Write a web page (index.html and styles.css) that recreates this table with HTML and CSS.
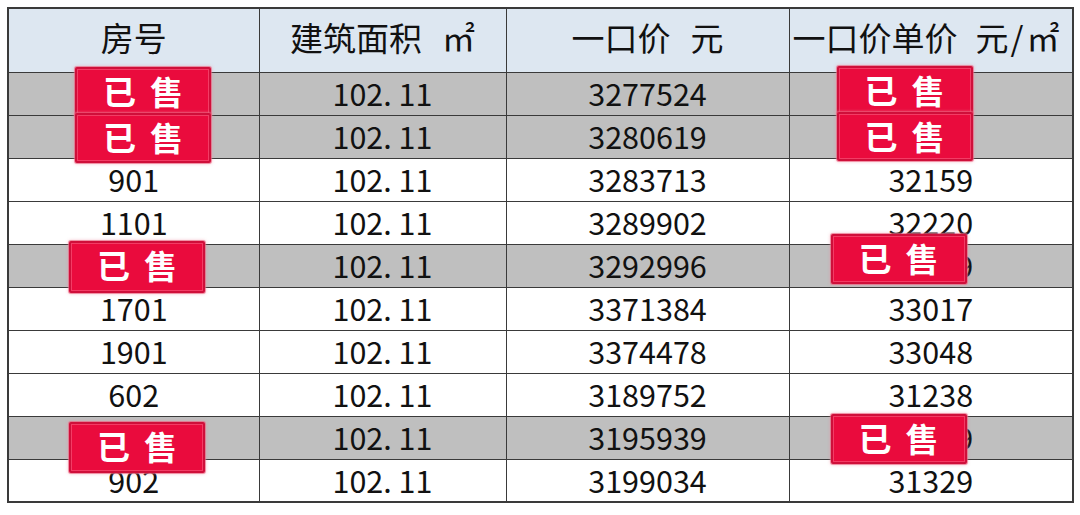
FILE: index.html
```html
<!DOCTYPE html>
<html lang="zh-CN">
<head>
<meta charset="utf-8">
<title>价格表</title>
<link rel="stylesheet" href="styles.css">
</head>
<body>
<table class="price-table">
  <colgroup>
    <col class="c1"><col class="c2"><col class="c3"><col class="c4">
  </colgroup>
  <thead>
    <tr class="head-row">
      <th>房号</th>
      <th>建筑面积<span class="unit">㎡</span></th>
      <th>一口价<span class="unit">元</span></th>
      <th class="wide">一口价单价<span class="unit">元<span class="slash">/</span>㎡</span></th>
    </tr>
  </thead>
  <tbody>
    <tr class="sold">
      <td class="cell">701<span class="stamp s1a">已售</span></td>
      <td>102. 11</td><td>3277524</td>
      <td class="cell">32098<span class="stamp s4a">已售</span></td>
    </tr>
    <tr class="sold">
      <td class="cell">801<span class="stamp s1b">已售</span></td>
      <td>102. 11</td><td>3280619</td>
      <td class="cell">32128<span class="stamp s4b">已售</span></td>
    </tr>
    <tr><td>901</td><td>102. 11</td><td>3283713</td><td>32159</td></tr>
    <tr><td>1101</td><td>102. 11</td><td>3289902</td><td>32220</td></tr>
    <tr class="sold">
      <td class="cell">1201<span class="stamp s1c">已售</span></td>
      <td>102. 11</td><td>3292996</td>
      <td class="cell">32249<span class="stamp s4c">已售</span></td>
    </tr>
    <tr><td>1701</td><td>102. 11</td><td>3371384</td><td>33017</td></tr>
    <tr><td>1901</td><td>102. 11</td><td>3374478</td><td>33048</td></tr>
    <tr><td>602</td><td>102. 11</td><td>3189752</td><td>31238</td></tr>
    <tr class="sold">
      <td class="cell">802<span class="stamp s1d">已售</span></td>
      <td>102. 11</td><td>3195939</td>
      <td class="cell">31299<span class="stamp s4d">已售</span></td>
    </tr>
    <tr><td>902</td><td>102. 11</td><td>3199034</td><td>31329</td></tr>
  </tbody>
</table>
</body>
</html>
```

FILE: styles.css
```css
html, body {
  margin: 0;
  padding: 0;
  background: #ffffff;
}

body {
  padding: 7px 0 0 7px;
  font-family: "Noto Sans CJK SC", "Noto Sans", sans-serif;
  color: #111111;
}

.price-table {
  border-collapse: collapse;
  table-layout: fixed;
  width: 1065px;
  border: 2px solid #3a3a3a;
}

.c1 { width: 251px; }
.c2 { width: 247px; }
.c3 { width: 283px; }
.c4 { width: 284px; }

.price-table th,
.price-table td {
  border: 1.5px solid #3a3a3a;
  text-align: center;
  vertical-align: middle;
  padding: 0;
  white-space: nowrap;
}

.head-row {
  height: 64px;
}

.price-table tbody tr {
  height: 43px;
}

.price-table th {
  background: #dde7f1;
  font-weight: 400;
  font-size: 33px;
  line-height: 1;
  padding-bottom: 5px;
}

.price-table th.wide {
  text-align: left;
  padding-left: 3px;
}

.unit {
  margin-left: 20px;
}

.wide .unit {
  margin-left: 18px;
}

.slash {
  margin: 0 3px 0 2px;
}

.price-table td {
  font-size: 30.5px;
  line-height: 1;
  padding-bottom: 1px;
}

.sold td {
  background: #bfbfbf;
}

.cell {
  position: relative;
}

.stamp {
  position: absolute;
  width: 136px;
  height: 49px;
  box-sizing: border-box;
  background: #ea0b3d;
  border: 2px solid #cf0f3a;
  box-shadow: inset 0 0 0 1px rgba(255, 120, 150, 0.45), 0 0 0 1px rgba(234, 90, 120, 0.55), 0 0 3px 1px rgba(240, 140, 160, 0.5);
  border-radius: 2px;
  color: #ffffff;
  font-weight: 700;
  font-size: 33px;
  line-height: 44px;
  letter-spacing: 14px;
  text-indent: 14px;
  text-align: center;
  z-index: 2;
}

.s1a { left: 66px; top: -6px; height: 50px; }
.s1b { left: 66px; top: -3px; height: 50px; }
.s1c { left: 60px; top: -4px; height: 52px; }
.s1d { left: 60px; top: 5px; height: 51px; }

.s4a { left: 47px; top: -7px; }
.s4b { left: 47px; top: -4px; }
.s4c { left: 41px; top: -11px; height: 50px; }
.s4d { left: 41px; top: -3px; height: 50px; }
```
